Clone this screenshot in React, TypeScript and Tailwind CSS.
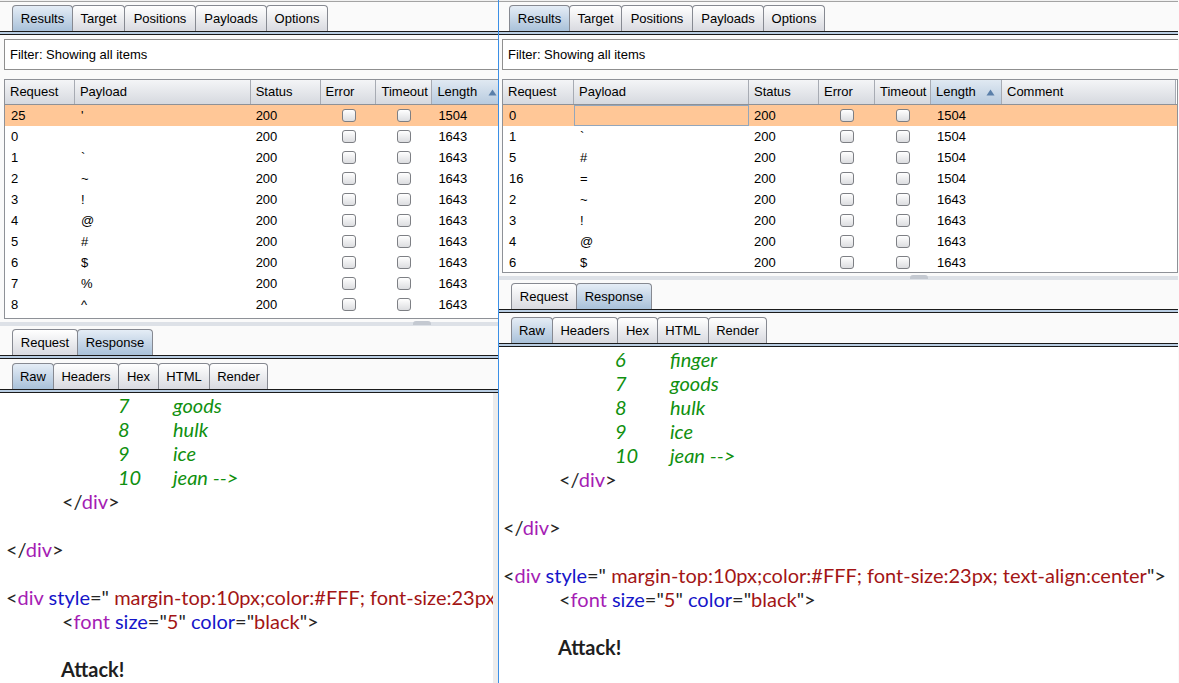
import clsx from "clsx";

type TabDef = { label: string; w: string };
type Row = { req: string; payload: string; length: string };
type Seg = { t: string; k: "br" | "tag" | "attr" | "val" };
type CodeLine =
  | { kind: "item"; num: string; word: string }
  | { kind: "markup"; indent: boolean; segs: Seg[] }
  | { kind: "blank" }
  | { kind: "bold"; text: string };

const MAIN_TABS: TabDef[] = [
  { label: "Results", w: "w-[61px]" },
  { label: "Target", w: "w-[53px]" },
  { label: "Positions", w: "w-[72px]" },
  { label: "Payloads", w: "w-[72px]" },
  { label: "Options", w: "w-[62px]" },
];

const VIEW_TABS: TabDef[] = [
  { label: "Request", w: "w-[66px]" },
  { label: "Response", w: "w-[76px]" },
];

const FORMAT_TABS: TabDef[] = [
  { label: "Raw", w: "w-[42px]" },
  { label: "Headers", w: "w-[66px]" },
  { label: "Hex", w: "w-[41px]" },
  { label: "HTML", w: "w-[52px]" },
  { label: "Render", w: "w-[59px]" },
];

const COLUMNS = ["Request", "Payload", "Status", "Error", "Timeout", "Length", "Comment"];
const LEFT_COLS = ["w-[70px]", "w-[176px]", "w-[70px]", "w-[56px]", "w-[56px]", "w-[72px]", "w-[175px]"];
const RIGHT_COLS = ["w-[71px]", "w-[175px]", "w-[70px]", "w-[56px]", "w-[56px]", "w-[71px]", "w-[174px]"];

const LEFT_ROWS: Row[] = [
  { req: "25", payload: "'", length: "1504" },
  { req: "0", payload: "", length: "1643" },
  { req: "1", payload: "`", length: "1643" },
  { req: "2", payload: "~", length: "1643" },
  { req: "3", payload: "!", length: "1643" },
  { req: "4", payload: "@", length: "1643" },
  { req: "5", payload: "#", length: "1643" },
  { req: "6", payload: "$", length: "1643" },
  { req: "7", payload: "%", length: "1643" },
  { req: "8", payload: "^", length: "1643" },
];

const RIGHT_ROWS: Row[] = [
  { req: "0", payload: "", length: "1504" },
  { req: "1", payload: "`", length: "1504" },
  { req: "5", payload: "#", length: "1504" },
  { req: "16", payload: "=", length: "1504" },
  { req: "2", payload: "~", length: "1643" },
  { req: "3", payload: "!", length: "1643" },
  { req: "4", payload: "@", length: "1643" },
  { req: "6", payload: "$", length: "1643" },
];

const TAIL: CodeLine[] = [
  { kind: "markup", indent: true, segs: [{ t: "</", k: "br" }, { t: "div", k: "tag" }, { t: ">", k: "br" }] },
  { kind: "blank" },
  { kind: "markup", indent: false, segs: [{ t: "</", k: "br" }, { t: "div", k: "tag" }, { t: ">", k: "br" }] },
  { kind: "blank" },
  {
    kind: "markup",
    indent: false,
    segs: [
      { t: "<", k: "br" },
      { t: "div", k: "tag" },
      { t: " ", k: "br" },
      { t: "style", k: "attr" },
      { t: '="', k: "br" },
      { t: " margin-top:10px;color:#FFF; font-size:23px; text-align:center", k: "val" },
      { t: '"', k: "br" },
      { t: ">", k: "br" },
    ],
  },
  {
    kind: "markup",
    indent: true,
    segs: [
      { t: "<", k: "br" },
      { t: "font", k: "tag" },
      { t: " ", k: "br" },
      { t: "size", k: "attr" },
      { t: '="', k: "br" },
      { t: "5", k: "val" },
      { t: '"', k: "br" },
      { t: " ", k: "br" },
      { t: "color", k: "attr" },
      { t: '="', k: "br" },
      { t: "black", k: "val" },
      { t: '"', k: "br" },
      { t: ">", k: "br" },
    ],
  },
  { kind: "blank" },
  { kind: "bold", text: "Attack!" },
];

const LEFT_CODE: CodeLine[] = [
  { kind: "item", num: "7", word: "goods" },
  { kind: "item", num: "8", word: "hulk" },
  { kind: "item", num: "9", word: "ice" },
  { kind: "item", num: "10", word: "jean -->" },
  ...TAIL,
];

const RIGHT_CODE: CodeLine[] = [
  { kind: "item", num: "6", word: "finger" },
  { kind: "item", num: "7", word: "goods" },
  { kind: "item", num: "8", word: "hulk" },
  { kind: "item", num: "9", word: "ice" },
  { kind: "item", num: "10", word: "jean -->" },
  ...TAIL,
];

const SEG_COLOR: Record<Seg["k"], string> = {
  br: "text-[#262626]",
  tag: "text-[#a51db4]",
  attr: "text-[#1515c9]",
  val: "text-[#a31515]",
};

const TabStrip = ({ tabs, active, inset }: { tabs: TabDef[]; active: number; inset: string }) => (
  <div>
    <div className={clsx("flex h-[26px]", inset)}>
      {tabs.map((tab, i) => (
        <div
          key={tab.label}
          className={clsx(
            "flex h-[26px] items-center justify-center rounded-t-[4px] border border-b-0 border-[#868991] pt-[1px]",
            tab.w,
            i > 0 && "-ml-px",
            i === active
              ? "relative z-10 bg-linear-to-b from-[#e5edf6] to-[#a9c1d9]"
              : "bg-linear-to-b from-[#ffffff] to-[#d9dae0]"
          )}
        >
          {tab.label}
        </div>
      ))}
    </div>
    <div className="h-[4px] border-y border-[#1b1b1b] bg-[#b9cde2]" />
  </div>
);

const Checkbox = () => (
  <span className="block h-[13px] w-[14px] rounded-[3px] border border-[#7d7f84] bg-linear-to-b from-[#ffffff] to-[#dcdde0]" />
);

const SortArrow = () => (
  <svg width="9" height="7" viewBox="0 0 9 7" className="ml-auto mr-[6px]">
    <path d="M4.5 0.5 L8.5 6.5 L0.5 6.5 Z" fill="#5a7fa9" />
  </svg>
);

const ResultsTable = ({
  rows,
  cols,
  bodyHeight,
  focusCell,
  inset,
}: {
  rows: Row[];
  cols: string[];
  bodyHeight: string;
  focusCell: boolean;
  inset: string;
}) => (
  <div className={clsx("w-[676px] border-x border-b border-[#8e9197] bg-white", inset)}>
    <div className="flex h-[26px] border-y border-[#8e9197]">
      {COLUMNS.map((name, i) => (
        <div
          key={name}
          className={clsx(
            "flex h-full items-center border-r border-[#a7abb3] pl-[5px]",
            cols[i],
            name === "Length"
              ? "bg-linear-to-b from-[#e0e9f2] to-[#b8cbdf]"
              : "bg-linear-to-b from-[#f4f5f7] to-[#d6d9df]"
          )}
        >
          {name}
          {name === "Length" ? <SortArrow /> : null}
        </div>
      ))}
    </div>
    <div className={clsx("overflow-hidden", bodyHeight)}>
      {rows.map((row, r) => (
        <div key={row.req} className={clsx("flex h-[21px] items-center", r === 0 ? "bg-[#ffc797]" : "bg-white")}>
          <div className={clsx("pl-[6px]", cols[0])}>{row.req}</div>
          <div
            className={clsx(
              "flex h-full items-center pl-[6px]",
              cols[1],
              r === 0 && focusCell && "border border-[#93a6bb]"
            )}
          >
            {row.payload}
          </div>
          <div className={clsx("pl-[5px]", cols[2])}>200</div>
          <div className={clsx("flex justify-center", cols[3])}>
            <Checkbox />
          </div>
          <div className={clsx("flex justify-center", cols[4])}>
            <Checkbox />
          </div>
          <div className={clsx("pl-[6px]", cols[5])}>{row.length}</div>
          <div className={cols[6]} />
        </div>
      ))}
    </div>
  </div>
);

const Splitter = ({ handle }: { handle: string }) => (
  <div className="h-[10px] pt-[3px]">
    <div className="relative h-[4px] bg-[#dde1e7]">
      <div className={clsx("absolute top-[-1px] h-[4px] w-[18px] rounded-t-[3px] bg-[#c4c9d1]", handle)} />
    </div>
  </div>
);

const CodeView = ({ lines, inset }: { lines: CodeLine[]; inset: string }) => (
  <div className={clsx("flex-1 overflow-hidden whitespace-pre bg-white font-['Lato','Noto_Sans',sans-serif] text-[20px] leading-[24px]", inset)}>
    {lines.map((line, i) => {
      if (line.kind === "item") {
        return (
          <div key={i} className="flex pl-[112px] italic text-[#10900f]">
            <span className="w-[55px]">{line.num}</span>
            <span>{line.word}</span>
          </div>
        );
      }
      if (line.kind === "blank") return <div key={i} className="h-[24px]" />;
      if (line.kind === "bold") {
        return (
          <div key={i} className="pl-[55px] font-bold text-[#1f1f1f]">
            {line.text}
          </div>
        );
      }
      return (
        <div key={i} className={line.indent ? "pl-[56px]" : ""}>
          {line.segs.map((s, j) => (
            <span key={j} className={SEG_COLOR[s.k]}>
              {s.t}
            </span>
          ))}
        </div>
      );
    })}
  </div>
);

const IntruderWindow = ({ side }: { side: "left" | "right" }) => {
  const left = side === "left";
  return (
    <div
      className={clsx(
        "flex h-[683px] flex-col overflow-hidden bg-[#fafafa]",
        left ? "w-[498px]" : "w-[680px] border-l border-[#3b8fe6]"
      )}
    >
      <div className="h-[1px] bg-[#f1f1f1]" />
      <div className="h-[1px] bg-[#a3a3a3]" />
      <div className="h-[3px]" />
      <TabStrip tabs={MAIN_TABS} active={0} inset={left ? "pl-[12px]" : "pl-[10px]"} />
      <div className="h-[4px]" />
      <div
        className={clsx(
          "flex h-[31px] w-[720px] shrink-0 items-center border border-[#8f8f8f] bg-white pl-[5px]",
          left ? "ml-[4px]" : "ml-[3px]"
        )}
      >
        Filter: Showing all items
      </div>
      <div className="h-[9px]" />
      <ResultsTable
        rows={left ? LEFT_ROWS : RIGHT_ROWS}
        cols={left ? LEFT_COLS : RIGHT_COLS}
        bodyHeight={left ? "h-[213px]" : "h-[167px]"}
        focusCell={!left}
        inset={left ? "ml-[4px]" : "ml-[3px]"}
      />
      <Splitter handle={left ? "left-[413px]" : "left-[411px]"} />
      <TabStrip tabs={VIEW_TABS} active={1} inset="pl-[12px]" />
      <div className="h-[4px]" />
      <TabStrip tabs={FORMAT_TABS} active={0} inset="pl-[12px]" />
      <div className="flex flex-1 overflow-hidden">
        <CodeView lines={left ? LEFT_CODE : RIGHT_CODE} inset={left ? "pl-[6px]" : "pl-[4px]"} />
        {left ? <div className="w-[5px] bg-[#ececec]" /> : null}
      </div>
    </div>
  );
};

export default function App() {
  return (
    <div className="flex h-[683px] w-[1179px] overflow-hidden bg-[#fafafa] font-['Liberation_Sans',Arial,sans-serif] text-[13px] text-black">
      <IntruderWindow side="left" />
      <IntruderWindow side="right" />
    </div>
  );
}
